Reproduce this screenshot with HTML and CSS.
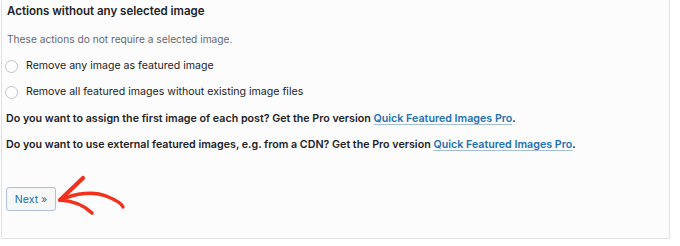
FILE: index.html
```html
<!DOCTYPE html>
<html>
<head>
<meta charset="utf-8">
<link rel="stylesheet" href="styles.css">
</head>
<body>
<div class="panel">
  <h2 class="title">Actions without any selected image</h2>
  <p class="desc">These actions do not require a selected image.</p>
  <label class="option"><span class="radio"></span>Remove any image as featured image</label>
  <label class="option"><span class="radio"></span>Remove all featured images without existing image files</label>
  <p class="promo">Do you want to assign the first image of each post? Get the Pro version <a href="#">Quick Featured Images Pro</a>.</p>
  <p class="promo">Do you want to use external featured images, e.g. from a CDN? Get the Pro version <a href="#">Quick Featured Images Pro</a>.</p>
  <div class="actions">
    <button class="btn">Next »</button>
    <svg class="arrow" width="80" height="60" viewBox="0 0 80 60">
      <path d="M4 30 C 20 23, 38 21, 50 26 C 60 30, 66 34, 67 37" fill="none" stroke="#f2301c" stroke-width="3.4" stroke-linecap="round"/>
      <path d="M4 30 L 27 8" fill="none" stroke="#f2301c" stroke-width="4.2" stroke-linecap="round"/>
      <path d="M4 30 C 18 31, 29 36, 36 43" fill="none" stroke="#f2301c" stroke-width="3.6" stroke-linecap="round"/>
    </svg>
  </div>
</div>
</body>
</html>
```
FILE: styles.css
```css
html, body {
  margin: 0;
  padding: 0;
  background: #ffffff;
}
body {
  width: 680px;
  height: 246px;
  font-family: Inter, "Noto Sans", sans-serif;
  color: #1d2327;
}
.panel {
  margin-left: 1px;
  width: 669px;
  height: 239px;
  box-sizing: border-box;
  background: #fcfcfc;
  border: 1px solid #e2e2e4;
  border-top: none;
  display: flex;
  flex-direction: column;
  padding-left: 5px;
}
.title {
  margin: 2px 0 0;
  font-size: 11.5px;
  font-weight: 600;
  line-height: 18px;
}
.desc {
  margin: 11px 0 0;
  font-size: 10.2px;
  line-height: 16px;
  color: #646970;
}
.option {
  display: flex;
  align-items: center;
  gap: 8px;
  font-size: 10.6px;
  line-height: 16px;
  margin-top: 11px;
  color: #1d2327;
}
.option + .option {
  margin-top: 10px;
}
.radio {
  width: 13px;
  height: 13px;
  box-sizing: border-box;
  border: 1px solid #c3c4c7;
  border-radius: 50%;
  background: #fff;
  flex: none;
  margin-left: -2px;
}
.promo {
  margin: 11px 0 0;
  font-size: 10.7px;
  font-weight: 600;
  line-height: 16px;
  margin-left: -1px;
}
.promo + .promo {
  margin-top: 10px;
}
.promo a {
  color: #2271b1;
  text-decoration: underline;
  text-decoration-color: #a4bfda;
  text-underline-offset: 2px;
}
.actions {
  margin-top: 34px;
  display: flex;
  align-items: flex-start;
  position: relative;
}
.btn {
  font-family: inherit;
  font-size: 10.6px;
  color: #2271b1;
  background: #f6f7f7;
  border: 1px solid #aec0d5;
  border-radius: 3px;
  height: 24px;
  width: 50px;
  padding: 0;
  margin-left: -1px;
}
.arrow {
  position: absolute;
  left: 49px;
  top: -17px;
}
```
